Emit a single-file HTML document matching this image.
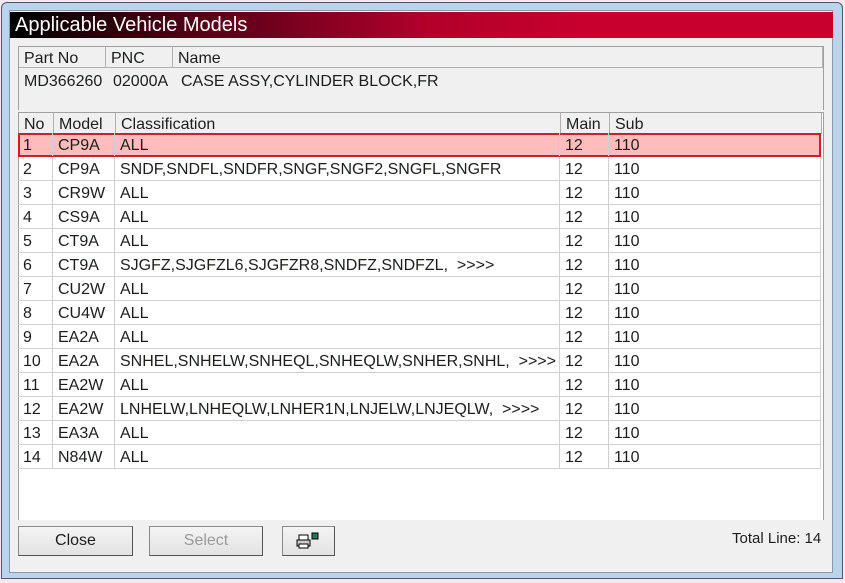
<!DOCTYPE html>
<html><head><style>
*{margin:0;padding:0;box-sizing:border-box}
body{width:845px;height:583px;background:#f6e8f2;position:relative;overflow:hidden;font-family:"Liberation Sans",sans-serif;font-size:16px;color:#1a1f1a}
.frame{position:absolute;left:1px;top:2px;width:842px;height:577px;background:#bcd3ec;border:1px solid #4a5a6a;border-radius:6px 6px 0 0}
.inner{position:absolute;left:9px;top:10px;width:824px;height:563px;background:#f0f0f0;border:1px solid #8a9aab}
.title{position:absolute;left:10px;top:12px;width:823px;height:26px;background:linear-gradient(90deg,#000 0%,#5a0018 25%,#b0002a 50%,#c8002e 70%,#c8002e 100%);color:#fff;font-size:20px;line-height:27px;padding-left:5px}
.top{position:absolute;left:18px;top:46px;width:806px;height:64px;border:1px solid #a0a0a0;border-bottom:none;background:#f0f0f0}
.cell{position:absolute;line-height:22px;padding-left:5px;white-space:nowrap}
.h{background:#f0f0f0;border-right:1px solid #b0b0b0;border-bottom:1px solid #b0b0b0;height:21px}
.grid{position:absolute;left:18px;top:112px;width:806px;height:408px;background:#fff;border:1px solid #a0a0a0;border-bottom:none}
.row{position:absolute;left:0;width:803px;height:24px;border-bottom:1px solid #d0d0d0}
.row .cell{line-height:25px;border-right:1px solid #d0d0d0;height:23px}
.sel{background:#ffbcbc;outline:2px solid #d02020;outline-offset:-2px}
.btn{position:absolute;top:526px;height:30px;background:linear-gradient(#f4f4f4,#e2e2e2);border:1px solid #8a8a8a;border-right-color:#555;border-bottom-color:#555;text-align:center;line-height:28px;font-size:16px}
</style></head><body>
<div class="frame"></div>
<div class="inner"></div>
<div class="title">Applicable Vehicle Models</div>
<div class="top">
<div class="cell h" style="left:0;top:0;width:87px;line-height:24px">Part No</div>
<div class="cell h" style="left:87px;top:0;width:67px;line-height:24px">PNC</div>
<div class="cell h" style="left:154px;top:0;width:650px;line-height:24px">Name</div>
<div class="cell" style="left:0;top:24px">MD366260</div>
<div class="cell" style="left:89px;top:24px">02000A</div>
<div class="cell" style="left:157px;top:24px">CASE ASSY,CYLINDER BLOCK,FR</div>
</div>
<div class="grid">
<div class="cell h" style="left:0;top:0;width:35px;line-height:24px">No</div>
<div class="cell h" style="left:35px;top:0;width:62px;line-height:24px">Model</div>
<div class="cell h" style="left:97px;top:0;width:445px;line-height:24px">Classification</div>
<div class="cell h" style="left:542px;top:0;width:49px;line-height:24px">Main</div>
<div class="cell h" style="left:591px;top:0;width:212px;line-height:24px">Sub</div>
</div>
<div class="grid" style="background:none;border:none">
<div class="row sel" style="top:21px"><div class="cell" style="left:0;width:35px">1</div><div class="cell" style="left:35px;width:62px">CP9A</div><div class="cell" style="left:97px;width:445px">ALL</div><div class="cell" style="left:542px;width:49px">12</div><div class="cell" style="left:591px;width:212px;border:none">110</div></div>
<div class="row" style="top:45px"><div class="cell" style="left:0;width:35px">2</div><div class="cell" style="left:35px;width:62px">CP9A</div><div class="cell" style="left:97px;width:445px">SNDF,SNDFL,SNDFR,SNGF,SNGF2,SNGFL,SNGFR</div><div class="cell" style="left:542px;width:49px">12</div><div class="cell" style="left:591px;width:212px">110</div></div>
<div class="row" style="top:69px"><div class="cell" style="left:0;width:35px">3</div><div class="cell" style="left:35px;width:62px">CR9W</div><div class="cell" style="left:97px;width:445px">ALL</div><div class="cell" style="left:542px;width:49px">12</div><div class="cell" style="left:591px;width:212px">110</div></div>
<div class="row" style="top:93px"><div class="cell" style="left:0;width:35px">4</div><div class="cell" style="left:35px;width:62px">CS9A</div><div class="cell" style="left:97px;width:445px">ALL</div><div class="cell" style="left:542px;width:49px">12</div><div class="cell" style="left:591px;width:212px">110</div></div>
<div class="row" style="top:117px"><div class="cell" style="left:0;width:35px">5</div><div class="cell" style="left:35px;width:62px">CT9A</div><div class="cell" style="left:97px;width:445px">ALL</div><div class="cell" style="left:542px;width:49px">12</div><div class="cell" style="left:591px;width:212px">110</div></div>
<div class="row" style="top:141px"><div class="cell" style="left:0;width:35px">6</div><div class="cell" style="left:35px;width:62px">CT9A</div><div class="cell" style="left:97px;width:445px">SJGFZ,SJGFZL6,SJGFZR8,SNDFZ,SNDFZL, &nbsp;&gt;&gt;&gt;&gt;</div><div class="cell" style="left:542px;width:49px">12</div><div class="cell" style="left:591px;width:212px">110</div></div>
<div class="row" style="top:165px"><div class="cell" style="left:0;width:35px">7</div><div class="cell" style="left:35px;width:62px">CU2W</div><div class="cell" style="left:97px;width:445px">ALL</div><div class="cell" style="left:542px;width:49px">12</div><div class="cell" style="left:591px;width:212px">110</div></div>
<div class="row" style="top:189px"><div class="cell" style="left:0;width:35px">8</div><div class="cell" style="left:35px;width:62px">CU4W</div><div class="cell" style="left:97px;width:445px">ALL</div><div class="cell" style="left:542px;width:49px">12</div><div class="cell" style="left:591px;width:212px">110</div></div>
<div class="row" style="top:213px"><div class="cell" style="left:0;width:35px">9</div><div class="cell" style="left:35px;width:62px">EA2A</div><div class="cell" style="left:97px;width:445px">ALL</div><div class="cell" style="left:542px;width:49px">12</div><div class="cell" style="left:591px;width:212px">110</div></div>
<div class="row" style="top:237px"><div class="cell" style="left:0;width:35px">10</div><div class="cell" style="left:35px;width:62px">EA2A</div><div class="cell" style="left:97px;width:445px">SNHEL,SNHELW,SNHEQL,SNHEQLW,SNHER,SNHL, &nbsp;&gt;&gt;&gt;&gt;</div><div class="cell" style="left:542px;width:49px">12</div><div class="cell" style="left:591px;width:212px">110</div></div>
<div class="row" style="top:261px"><div class="cell" style="left:0;width:35px">11</div><div class="cell" style="left:35px;width:62px">EA2W</div><div class="cell" style="left:97px;width:445px">ALL</div><div class="cell" style="left:542px;width:49px">12</div><div class="cell" style="left:591px;width:212px">110</div></div>
<div class="row" style="top:285px"><div class="cell" style="left:0;width:35px">12</div><div class="cell" style="left:35px;width:62px">EA2W</div><div class="cell" style="left:97px;width:445px">LNHELW,LNHEQLW,LNHER1N,LNJELW,LNJEQLW, &nbsp;&gt;&gt;&gt;&gt;</div><div class="cell" style="left:542px;width:49px">12</div><div class="cell" style="left:591px;width:212px">110</div></div>
<div class="row" style="top:309px"><div class="cell" style="left:0;width:35px">13</div><div class="cell" style="left:35px;width:62px">EA3A</div><div class="cell" style="left:97px;width:445px">ALL</div><div class="cell" style="left:542px;width:49px">12</div><div class="cell" style="left:591px;width:212px">110</div></div>
<div class="row" style="top:333px"><div class="cell" style="left:0;width:35px">14</div><div class="cell" style="left:35px;width:62px">N84W</div><div class="cell" style="left:97px;width:445px">ALL</div><div class="cell" style="left:542px;width:49px">12</div><div class="cell" style="left:591px;width:212px">110</div></div>
</div>
<div class="btn" style="left:18px;width:115px">Close</div>
<div class="btn" style="left:149px;width:114px;color:#999">Select</div>
<div class="btn" style="left:282px;width:53px">
<svg width="26" height="18" viewBox="0 0 26 18" style="margin-top:5px"><rect x="3" y="3" width="9" height="5" fill="#fff" stroke="#000"/><path d="M1 8h13v6H1z" fill="#ccc" stroke="#000"/><rect x="3" y="12" width="9" height="4" fill="#fff" stroke="#000"/><rect x="16" y="1" width="6" height="6" fill="#1a7a5a" stroke="#000"/></svg>
</div>
<div style="position:absolute;left:732px;top:530px;font-size:15px">Total Line: 14</div>
</body></html>
